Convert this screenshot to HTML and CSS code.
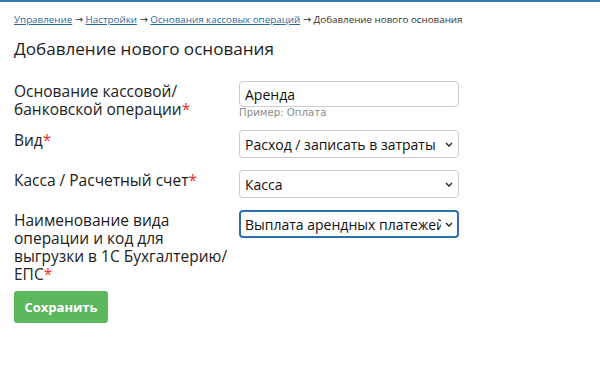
FILE: index.html
```html
<!DOCTYPE html>
<html lang="ru">
<head>
<meta charset="utf-8">
<link rel="stylesheet" href="styles.css">
</head>
<body>
<div class="page">
  <div class="crumbs">
    <a href="#">Управление</a> → <a href="#">Настройки</a> → <a href="#">Основания кассовых операций</a> → Добавление нового основания
  </div>
  <h1 class="title">Добавление нового основания</h1>
  <form class="form">
    <div class="row">
      <label class="label">Основание кассовой/ банковской операции<span class="req">*</span></label>
      <div class="field">
        <input class="control" type="text" value="Аренда">
        <div class="hint">Пример: Оплата</div>
      </div>
    </div>
    <div class="row">
      <label class="label">Вид<span class="req">*</span></label>
      <div class="field">
        <div class="select-wrap">
          <select class="control select"><option>Расход / записать в затраты</option></select>
          <svg class="chev" viewBox="0 0 8 5" width="8" height="5"><path d="M1 1l3 3 3-3" fill="none" stroke="#222" stroke-width="1.4"/></svg>
        </div>
      </div>
    </div>
    <div class="row">
      <label class="label">Касса / Расчетный счет<span class="req">*</span></label>
      <div class="field">
        <div class="select-wrap">
          <select class="control select"><option>Касса</option></select>
          <svg class="chev" viewBox="0 0 8 5" width="8" height="5"><path d="M1 1l3 3 3-3" fill="none" stroke="#222" stroke-width="1.4"/></svg>
        </div>
      </div>
    </div>
    <div class="row">
      <label class="label">Наименование вида операции и код для выгрузки в 1С Бухгалтерию/ ЕПС<span class="req">*</span></label>
      <div class="field">
        <div class="select-wrap">
          <select class="control select focus"><option>Выплата арендных платежей</option></select>
          <svg class="chev" viewBox="0 0 8 5" width="8" height="5"><path d="M1 1l3 3 3-3" fill="none" stroke="#222" stroke-width="1.4"/></svg>
        </div>
      </div>
    </div>
    <button class="btn" type="button">Сохранить</button>
  </form>
</div>
</body>
</html>
```
FILE: styles.css
```css
html, body {
  margin: 0;
  padding: 0;
  background: #fff;
}
body {
  font-family: "Open Sans", "DejaVu Sans", sans-serif;
  color: #222;
  border-top: 2px solid #3b78b0;
}
.page {
  padding: 11px 14px 0;
}
.crumbs {
  font-size: 9.8px;
  line-height: 14px;
  color: #333;
}
.crumbs a {
  color: #2a6a9e;
  text-decoration: underline;
}
.title {
  font-size: 17.1px;
  font-weight: normal;
  margin: 10px 0 20px;
  line-height: 24px;
}
.form {
  display: flex;
  flex-direction: column;
  gap: 12px;
}
.row {
  display: grid;
  grid-template-columns: 216px 220px;
  column-gap: 9px;
  align-items: start;
}
.label {
  font-size: 15.5px;
  line-height: 18px;
  padding-top: 1px;
}
.req {
  color: #e33;
}
.field {
  display: flex;
  flex-direction: column;
}
.control {
  box-sizing: border-box;
  width: 220px;
  height: 26px;
  border: 1px solid #ccc;
  border-radius: 4px;
  font-family: inherit;
  font-size: 14px;
  color: #111;
  padding: 0 5px;
  background: #fff;
  margin: 0;
}
.select {
  height: 28px;
  -webkit-appearance: none;
  appearance: none;
  padding-right: 16px;
}
.focus {
  border: 2px solid #2f6ea8;
  padding-left: 4px;
}
.select-wrap {
  position: relative;
}
.chev {
  position: absolute;
  right: 6px;
  top: 12px;
}
.hint {
  font-family: "DejaVu Sans", Verdana, sans-serif;
  font-size: 10.2px;
  line-height: 11px;
  color: #8a8a8a;
  margin-top: 0;
}
.btn {
  align-self: flex-start;
  margin-top: -4px;
  background: #5cb85c;
  color: #fff;
  border: 0;
  border-radius: 3px;
  font-family: inherit;
  font-weight: bold;
  font-size: 13px;
  width: 94px;
  height: 32px;
  padding: 0;
}
```
